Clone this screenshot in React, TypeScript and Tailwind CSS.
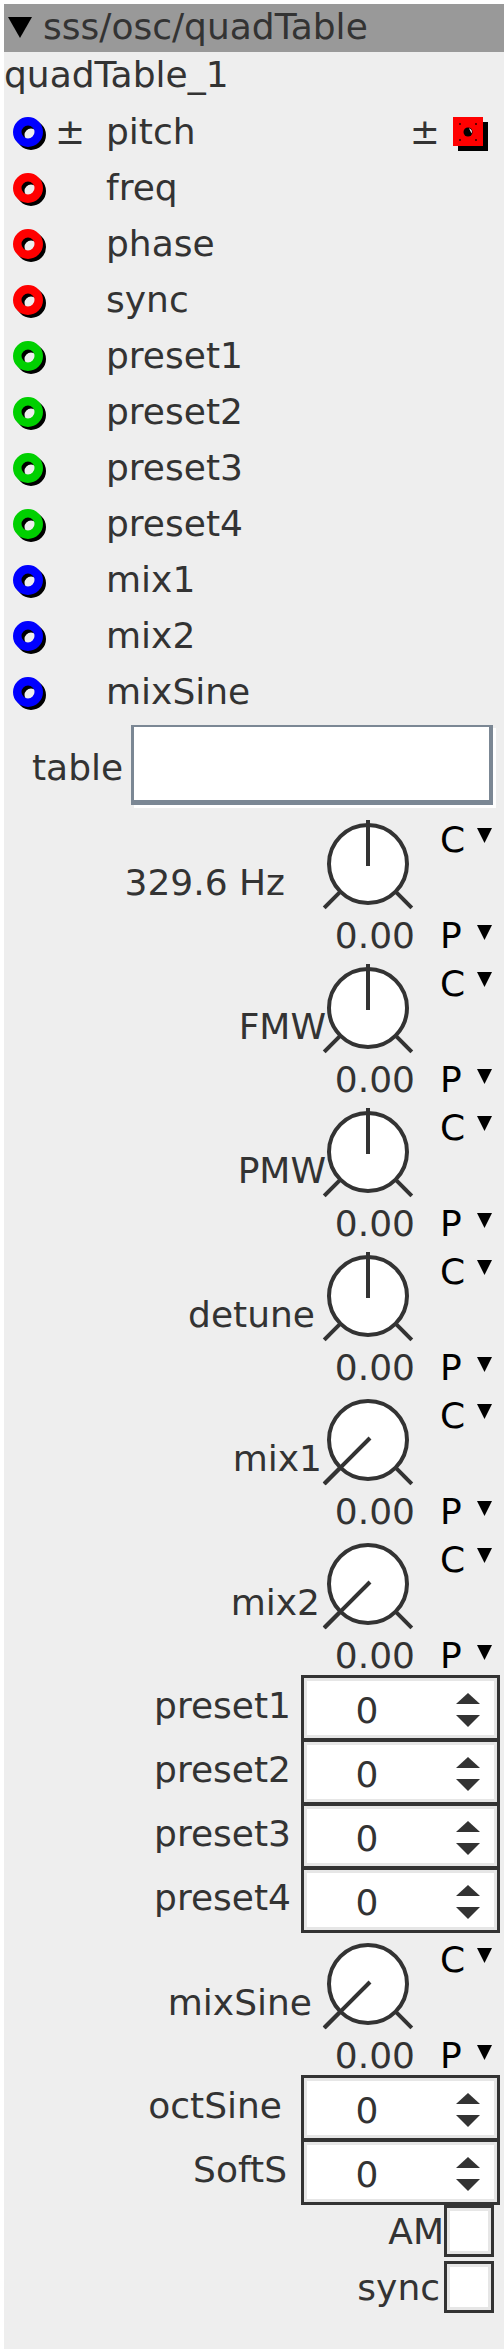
import React from 'react'

const ports: { name: string; color: string; pm?: boolean }[] = [
  { name: 'pitch', color: '#0000ff', pm: true },
  { name: 'freq', color: '#ff0000' },
  { name: 'phase', color: '#ff0000' },
  { name: 'sync', color: '#ff0000' },
  { name: 'preset1', color: '#00d000' },
  { name: 'preset2', color: '#00d000' },
  { name: 'preset3', color: '#00d000' },
  { name: 'preset4', color: '#00d000' },
  { name: 'mix1', color: '#0000ff' },
  { name: 'mix2', color: '#0000ff' },
  { name: 'mixSine', color: '#0000ff' },
]

function Ring({ color }: { color: string }) {
  return (
    <svg width="36" height="36" className="ml-[8px] shrink-0">
      <circle cx="19" cy="21" r="10.75" stroke="#000" strokeWidth="8.5" fill="none" />
      <circle cx="16" cy="18" r="10.75" stroke={color} strokeWidth="8.5" fill="none" />
    </svg>
  )
}

function OutPort() {
  return (
    <svg width="40" height="40" className="shrink-0">
      <rect x="8" y="10" width="30" height="29" fill="#000" />
      <rect x="3" y="5" width="30" height="29" fill="#ff0000" />
      {/* corner marks */}
      <rect x="9" y="11" width="2" height="2" fill="#600" />
      <rect x="25" y="11" width="2" height="2" fill="#600" />
      <rect x="9" y="27" width="2" height="2" fill="#600" />
      <rect x="25" y="27" width="2" height="2" fill="#600" />
      <circle cx="18" cy="20" r="4.5" fill="#000" />
      <path d="M19 16.2 A4 4 0 0 1 21.6 21.5 Z" fill="#fff" />
    </svg>
  )
}

function Tri({ className }: { className?: string }) {
  return (
    <svg width="15" height="15" className={className}>
      <polygon points="0,0 15,0 7.5,15" fill="#000" />
    </svg>
  )
}

function Knob({ pos }: { pos: 'mid' | 'min' }) {
  return (
    <svg width="96" height="104" className="shrink-0">
      <line x1="20.4" y1="79.6" x2="4.2" y2="95.8" stroke="#333" strokeWidth="4" />
      <line x1="75.6" y1="79.6" x2="91.8" y2="95.8" stroke="#333" strokeWidth="4" />
      <circle cx="48" cy="52" r="39" fill="#fff" stroke="#333" strokeWidth="4" />
      {pos === 'mid' ? (
        <line x1="48" y1="54" x2="48" y2="8" stroke="#333" strokeWidth="4" />
      ) : (
        <line x1="50" y1="50" x2="4.2" y2="95.8" stroke="#333" strokeWidth="4" />
      )}
    </svg>
  )
}

function KnobBlock({ label, mr, pos = 'mid' }: { label: string; mr: string; pos?: 'mid' | 'min' }) {
  return (
    <div className="flex h-[144px]">
      <div className="flex-1 flex flex-col">
        <div className="flex justify-end h-[104px] pr-[24px]">
          <span className={`pt-[51px] leading-[40px] whitespace-nowrap relative z-10 ${mr}`}>{label}</span>
          <Knob pos={pos} />
        </div>
        <div className="flex justify-end h-[40px] pr-[25px]">
          <span className="leading-[40px]">0.00</span>
        </div>
      </div>
      <div className="w-[64px] flex flex-col pt-[8px] text-black">
        <div className="flex items-start h-[96px]">
          <span className="w-[37px] leading-[40px]">C</span>
          <Tri className="mt-[8px]" />
        </div>
        <div className="flex items-start h-[40px]">
          <span className="w-[37px] leading-[40px]">P</span>
          <Tri className="mt-[9px]" />
        </div>
      </div>
    </div>
  )
}

function Spin({ label, mr }: { label: string; mr: string }) {
  return (
    <div className="flex justify-end h-[64px]">
      <span className={`leading-[59px] ${mr}`}>{label}</span>
      <div className="flex w-[197px] h-[64px] mr-[5px] bg-white border-2 border-[#333] shadow-[0_0_0_1px_#333,inset_0_0_0_3px_#e6e6e6]">
        <span className="w-[126px] text-center pt-[13px] leading-[40px]">0</span>
        <svg width="24" height="34" className="ml-[26px] mt-[15px]">
          <polygon points="12,0 24,11 0,11" fill="#333" />
          <polygon points="0,22 24,22 12,34" fill="#333" />
        </svg>
      </div>
    </div>
  )
}

function Check({ label, mr }: { label: string; mr: string }) {
  return (
    <div className="flex justify-end h-[56px]">
      <span className={`leading-[56px] ${mr}`}>{label}</span>
      <div className="w-[50px] h-[52px] mt-[1px] mr-[10px] bg-white border-[3px] border-[#333] shadow-[inset_0_0_0_3px_#e6e6e6]" />
    </div>
  )
}

export default function App() {
  return (
    <div className="bg-white w-[504px] pt-[4px] pl-[4px] font-['DejaVu_Sans',sans-serif] text-[36px] text-[#333]">
      <div className="bg-[#eeeeee] w-[500px] pb-[33px]">
        {/* Title bar */}
        <div className="flex items-start h-[48px] bg-[#999999]">
          <svg width="24" height="21" className="ml-[4px] mt-[13px]">
            <polygon points="0,0 24,0 12,21" fill="#000" />
          </svg>
          <span className="ml-[11px] leading-[45px]">sss/osc/quadTable</span>
        </div>
        <div className="h-[52px] leading-[45px]">quadTable_1</div>

        {/* Input ports */}
        {ports.map((p) => (
          <div key={p.name} className="flex items-center h-[56px]">
            <Ring color={p.color} />
            <span className="w-[58px] pl-[7px] leading-[56px]">{p.pm ? '±' : ''}</span>
            <span className="leading-[56px]">{p.name}</span>
            {p.pm && (
              <div className="ml-auto flex items-center mr-[14px]">
                <span className="leading-[56px] mr-[10px]">±</span>
                <OutPort />
              </div>
            )}
          </div>
        ))}

        {/* Table field */}
        <div className="flex items-start h-[92px]">
          <span className="ml-[28px] mt-[20px] leading-[56px]">table</span>
          <div className="ml-[8px] mt-[5px] w-[362px] h-[80px] bg-white border-t-2 border-l-[3px] border-r-[4px] border-b-[5px] border-[#7b8794] shadow-[3px_3px_0_0_#ffffff]" />
        </div>

        <KnobBlock label="329.6 Hz" mr="mr-[35px]" />
        <KnobBlock label="FMW" mr="mr-[-6px]" />
        <KnobBlock label="PMW" mr="mr-[-6px]" />
        <KnobBlock label="detune" mr="mr-[5px]" />
        <KnobBlock label="mix1" mr="mr-[-2px]" pos="min" />
        <KnobBlock label="mix2" mr="mr-0" pos="min" />

        <Spin label="preset1" mr="mr-[11px]" />
        <Spin label="preset2" mr="mr-[11px]" />
        <Spin label="preset3" mr="mr-[11px]" />
        <Spin label="preset4" mr="mr-[11px]" />

        <KnobBlock label="mixSine" mr="mr-[8px]" pos="min" />

        <Spin label="octSine" mr="mr-[20px]" />
        <Spin label="SoftS" mr="mr-[15px]" />

        <Check label="AM" mr="mr-0" />
        <Check label="sync" mr="mr-[4px]" />
      </div>
    </div>
  )
}
